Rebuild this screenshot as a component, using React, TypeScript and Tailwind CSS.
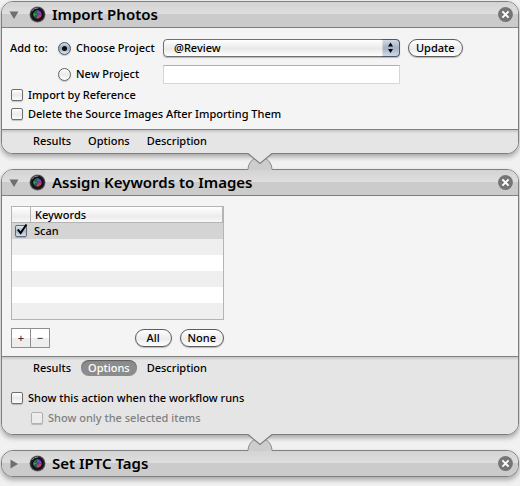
import { useState, type ReactNode } from "react";

function LensIcon() {
  return (
    <svg width="17" height="17" viewBox="0 0 17 17" aria-hidden="true" className="block">
      <circle cx="8.5" cy="8.5" r="8" fill="#6d6d70" />
      <circle cx="8.5" cy="8.5" r="7.2" fill="#1c1c1f" />
      <path d="M3 5.2 A6.4 6.4 0 0 1 9 2" fill="none" stroke="#8b8b90" />
      <circle cx="8.5" cy="8.5" r="5.2" fill="#17171d" />
      <path d="M8.5 8.5 L7 3.600 L11.500 4.400 Z" fill="#5b5fd0" />
      <path d="M8.5 8.5 L11.500 4.400 L13.300 8.500 Z" fill="#8a3fc4" />
      <path d="M8.5 8.5 L13.300 8.500 L11.500 12.500 Z" fill="#c2408f" />
      <path d="M8.5 8.5 L11.500 12.500 L7 13.300 Z" fill="#c8503a" />
      <path d="M8.5 8.5 L7 13.300 L4 10.500 Z" fill="#2a5d78" />
      <path d="M8.5 8.5 L4 10.500 L4 6.500 Z" fill="#2fa84e" />
      <path d="M8.5 8.5 L4 6.500 L7 3.600 Z" fill="#2c6a4c" />
      <circle cx="8.5" cy="8.5" r="4.900" fill="none" stroke="#101014" strokeWidth="1.200" />
    </svg>
  );
}

function Header({ title, open, onToggle }: { title: string; open: boolean; onToggle: () => void }) {
  return (
    <header className="flex h-[25px] items-center rounded-t-[11px] bg-linear-to-b from-[#d4d4d4] from-0% via-[#dedede] via-48% to-[#cbcbcb] to-48% pr-[5px] pl-[7px]">
      <button type="button" aria-label={`Toggle ${title}`} aria-expanded={open} onClick={onToggle}>
        <svg width="10" height="10" viewBox="0 0 10 10" aria-hidden="true" className="block">
          <path d={open ? "M0.5 1.5 H9.5 L5 9 Z" : "M1.5 0.5 V9.5 L9 5 Z"} fill="#6f6f6f" />
        </svg>
      </button>
      <span className="ml-2.5">
        <LensIcon />
      </span>
      <h2 className="ml-1.5 flex-1 pb-0.5 text-[15px] leading-5 font-semibold">{title}</h2>
      <button type="button" aria-label={`Remove ${title}`}>
        <svg width="15" height="15" viewBox="0 0 15 15" aria-hidden="true" className="block">
          <circle cx="7.5" cy="7.5" r="7.4" fill="#757575" />
          <path d="M4.4 4.4 L10.6 10.6 M10.6 4.4 L4.4 10.6" stroke="#fff" strokeWidth="2" />
        </svg>
      </button>
    </header>
  );
}

function Panel({ title, defaultOpen = true, children }: { title: string; defaultOpen?: boolean; children?: ReactNode }) {
  const [open, setOpen] = useState(defaultOpen);
  return (
    <section className="rounded-[12px] border border-[#7f7f7f] bg-[#f4f4f4] shadow-[0_3px_5px_rgba(0,0,0,0.3)]">
      <div className={open ? "" : "overflow-hidden rounded-[11px]"}>
        <Header title={title} open={open} onToggle={() => setOpen(!open)} />
      </div>
      {open && children}
    </section>
  );
}

function Connector() {
  return (
    <div className="relative h-[15px]">
      <svg width="26" height="18" viewBox="0 0 26 18" aria-hidden="true" className="absolute -top-[2px] left-1/2 -translate-x-1/2">
        <path d="M1 18 V17 C1.5 10 6 5.5 13 5.5 S24.5 10 25 17 V18 Z" fill="#cdcdcd" />
        <path d="M1 17.5 C1.5 10 6 5.5 13 5.5 S24.5 10 25 17.5" fill="none" stroke="#8a8a8a" />
        <path d="M1 0 V1.5 L13 11.5 L25 1.5 V0 Z" fill="#e5e5e5" />
        <path d="M1 1.5 L13 11.5 L25 1.5" fill="none" stroke="#7f7f7f" strokeWidth="1.2" />
      </svg>
    </div>
  );
}

function CheckBox({ checked = false, disabled = false, name }: { checked?: boolean; disabled?: boolean; name?: string }) {
  return (
    <span className="relative block size-3">
      <input
        type="checkbox"
        aria-label={name}
        defaultChecked={checked}
        disabled={disabled}
        className="peer block size-3 appearance-none rounded-[2px] border border-[#6e6e6e] bg-linear-to-b from-white via-[#eaeaea] to-[#fcfcfc] shadow-[0_1px_1px_rgba(0,0,0,0.2)] checked:border-[#5f6b7d] checked:from-[#dfe6ef] checked:via-[#a9b7ca] checked:to-[#d5e0ec] disabled:border-[#b0b0b0] disabled:from-[#efefef] disabled:to-[#efefef]"
      />
      <svg width="14" height="14" viewBox="0 0 14 14" aria-hidden="true" className="pointer-events-none absolute -top-[2px] left-0 hidden peer-checked:block">
        <path d="M2.8 6.5 L5.6 10 L11.5 1.5" fill="none" stroke="#000" strokeWidth="2" />
      </svg>
    </span>
  );
}

function Check({ label, disabled = false }: { label: string; disabled?: boolean }) {
  return (
    <label className={`flex h-4 items-center gap-[5px] ${disabled ? "text-[#808080]" : ""}`}>
      <CheckBox disabled={disabled} />
      {label}
    </label>
  );
}

function Radio({ label, checked = false }: { label: string; checked?: boolean }) {
  return (
    <label className="flex h-5 items-center gap-[5px] whitespace-nowrap">
      <span className="relative block size-[13px]">
        <input
          type="radio"
          name="project"
          defaultChecked={checked}
          className="peer block size-[13px] appearance-none rounded-full border border-[#626262] bg-linear-to-b from-white via-[#eaeaea] to-white shadow-[0_1px_1px_rgba(0,0,0,0.2)] checked:border-[#4d5562] checked:from-[#d3dae4] checked:via-[#9aa9bd] checked:to-[#d9e6f3]"
        />
        <span className="pointer-events-none absolute top-1 left-1 hidden size-[5px] rounded-full bg-[#0b0e14] peer-checked:block" />
      </span>
      {label}
    </label>
  );
}

function PillButton({ children }: { children: ReactNode }) {
  return (
    <button
      type="button"
      className="h-[18px] min-w-[37px] rounded-full border border-[#5c5c5c] bg-linear-to-b from-white from-0% via-[#ececec] via-55% to-white px-[7px] leading-4 shadow-[0_1px_1px_rgba(0,0,0,0.25)]"
    >
      {children}
    </button>
  );
}

function Footer({ initial, children }: { initial?: string; children?: ReactNode }) {
  const [active, setActive] = useState(initial);
  return (
    <footer className="rounded-b-[11px] border-t border-[#7f7f7f] bg-[#e5e5e5] px-[9px] pt-[3px] pb-1 shadow-[inset_0_3px_2px_-1px_rgba(0,0,0,0.12)]">
      <nav className="ml-[15px] flex gap-[3px]">
        {["Results", "Options", "Description"].map((tab) => (
          <button
            key={tab}
            type="button"
            onClick={() => setActive(active === tab ? undefined : tab)}
            className={`h-4 rounded-full px-[7px] leading-4 ${active === tab ? "bg-[#8c8c8c] text-white shadow-[inset_0_1px_1px_rgba(0,0,0,0.35)]" : ""}`}
          >
            {tab}
          </button>
        ))}
      </nav>
      {active && children}
    </footer>
  );
}

export default function App() {
  return (
    <main className="min-h-screen bg-[#f1f1f1] px-px pt-px font-['Noto_Sans','Open_Sans',sans-serif] text-[11px] leading-4 font-medium text-black">
      <Panel title="Import Photos">
        <div className="border-t border-[#7f7f7f] px-2 pt-2.5 pb-[7px]">
          <div className="grid grid-cols-[48px_105px_237px_auto] items-center justify-start gap-y-1.5">
            <span>Add to:</span>
            <Radio label="Choose Project" checked />
            <div className="relative">
              <select
                aria-label="Project"
                className="block h-[18px] w-full appearance-none rounded-[4px] border border-[#707070] bg-linear-to-b from-white from-0% via-[#e9e9e9] via-55% to-white px-2.5 leading-4 shadow-[0_1px_1px_rgba(0,0,0,0.25)]"
              >
                <option>@Review</option>
              </select>
              <svg width="18" height="18" viewBox="0 0 18 18" aria-hidden="true" className="pointer-events-none absolute top-0 right-0">
                <defs>
                  <linearGradient id="stepper" x1="0" y1="0" x2="0" y2="1">
                    <stop offset="0" stopColor="#d5dde8" />
                    <stop offset="0.5" stopColor="#a3b1c3" />
                    <stop offset="1" stopColor="#cfdcea" />
                  </linearGradient>
                </defs>
                <path d="M0.5 0.5 H14 Q17.5 0.5 17.5 4 V14 Q17.5 17.5 14 17.5 H0.5 Z" fill="url(#stepper)" />
                <path d="M0 0.5 H14 Q17.5 0.5 17.5 4 V14 Q17.5 17.5 14 17.5 H0" fill="none" stroke="#4f5763" />
                <path d="M8.5 3.5 L11 7.5 H6 Z M8.5 14 L11 10 H6 Z" fill="#000" />
              </svg>
            </div>
            <div className="ml-2">
              <PillButton>Update</PillButton>
            </div>
            <span />
            <Radio label="New Project" />
            <input
              type="text"
              aria-label="New project name"
              className="h-[19px] w-full border border-[#d6d6d6] border-t-[#b0b0b0] bg-white px-1 outline-none"
            />
          </div>
          <div className="mt-[3px] flex flex-col items-start gap-[3px] pl-px">
            <Check label="Import by Reference" />
            <Check label="Delete the Source Images After Importing Them" />
          </div>
        </div>
        <Footer />
      </Panel>

      <Connector />

      <Panel title="Assign Keywords to Images">
        <div className="border-t border-[#7f7f7f] px-[9px] pt-2.5 pb-2">
          <div className="w-[213px]">
            <div className="border border-[#b4b4b4] bg-white">
              <table className="w-full table-fixed border-separate border-spacing-0 text-left">
                <thead>
                  <tr className="h-4 bg-linear-to-b from-white from-0% via-[#ececec] via-60% to-[#fafafa]">
                    <th className="w-[19px] border-r border-b border-[#b4b4b4] p-0" aria-label="Enabled" />
                    <th className="border-r border-b border-[#b4b4b4] p-0 pl-1 leading-[15px] font-medium">Keywords</th>
                  </tr>
                </thead>
                <tbody>
                  <tr className="h-4 bg-[#d4d4d4]">
                    <td className="p-0 pl-[3px]">
                      <CheckBox name="Use Scan" checked />
                    </td>
                    <td className="p-0 pl-[3px]">Scan</td>
                  </tr>
                  {[0, 1, 2, 3, 4].map((row) => (
                    <tr key={row} className="h-4 odd:bg-white even:bg-[#efefef]">
                      <td className="p-0" />
                      <td className="p-0" />
                    </tr>
                  ))}
                </tbody>
              </table>
            </div>
            <div className="mt-2 flex items-center gap-2">
              <div className="mr-auto flex h-5 divide-x divide-[#909090] border border-[#909090] bg-linear-to-b from-white from-50% to-[#eeeeee] to-50%">
                <button type="button" aria-label="Add keyword" className="w-[19px] leading-[18px] text-[#333]">
                  +
                </button>
                <button type="button" aria-label="Remove keyword" className="w-[18px] leading-[18px] text-[#333]">
                  −
                </button>
              </div>
              <PillButton>All</PillButton>
              <PillButton>None</PillButton>
            </div>
          </div>
        </div>
        <Footer initial="Options">
          <div className="mt-3.5 mb-1 flex flex-col items-start gap-1">
            <Check label="Show this action when the workflow runs" />
            <div className="pl-5">
              <Check label="Show only the selected items" disabled />
            </div>
          </div>
        </Footer>
      </Panel>

      <Connector />

      <Panel title="Set IPTC Tags" defaultOpen={false} />
    </main>
  );
}
